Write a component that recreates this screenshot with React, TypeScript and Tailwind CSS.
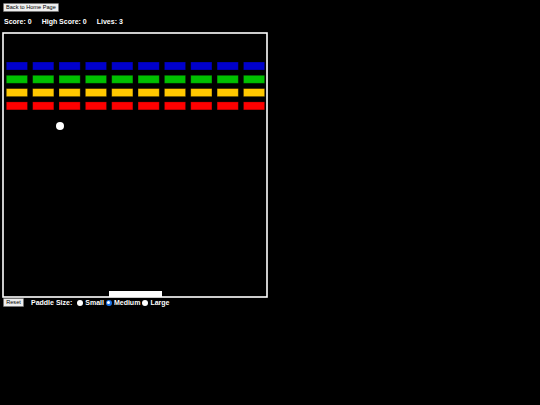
import React from 'react';

const ROWS = ['#0000cc', '#00c000', '#ffc800', '#ff0000'];
const COLS = 10;

function Board() {
  return (
    <svg width="266" height="266" viewBox="0 0 266 266" className="block">
      <rect x="1" y="1" width="264" height="264" fill="#000" stroke="#fff" strokeWidth="1.6" />
      {ROWS.map((color, r) =>
        Array.from({ length: COLS }).map((_, c) => (
          <rect
            key={`${r}-${c}`}
            x={4.3 + c * 26.35}
            y={30 + r * 13.3}
            width={21.2}
            height={8}
            fill={color}
            stroke="#000"
            strokeOpacity="0.35"
            strokeWidth="0.8"
          />
        ))
      )}
      <circle cx="58" cy="94" r="4" fill="#fff" />
      <rect x="107" y="259" width="53" height="6" fill="#fff" />
    </svg>
  );
}

function Radio({ checked, label }: { checked?: boolean; label: string }) {
  return (
    <span className="flex items-center gap-[2px]">
      {checked ? (
        <span className="w-[6px] h-[6px] rounded-full bg-[#1a73e8] flex items-center justify-center">
          <span className="w-[3px] h-[3px] rounded-full bg-white" />
        </span>
      ) : (
        <span className="w-[6px] h-[6px] rounded-full bg-white" />
      )}
      <span>{label}</span>
    </span>
  );
}

export default function App() {
  return (
    <div
      className="w-[540px] h-[405px] bg-black text-white overflow-hidden antialiased"
      style={{ fontFamily: '"Liberation Sans", Arial, sans-serif' }}
    >
      <div className="pl-[3px] pt-[3px]">
        <button className="h-[9px] px-[2px] bg-[#efefef] border border-[#767676] rounded-[1px] text-black text-[5.6px] leading-none flex items-center">
          Back to Home Page
        </button>
      </div>
      <div className="flex gap-[10px] pl-[4px] mt-[5px] text-[7px] font-bold leading-none h-[8px] items-center">
        <span>Score: 0</span>
        <span>High Score: 0</span>
        <span>Lives: 3</span>
      </div>
      <div className="pl-[2px] mt-[7px]">
        <Board />
      </div>
      <div className="flex items-center pl-[3px] text-[7px] font-bold leading-none">
        <button className="h-[9px] w-[21px] bg-[#efefef] border border-[#767676] rounded-[1px] text-black text-[5.6px] font-normal leading-none flex items-center justify-center">
          Reset
        </button>
        <span className="ml-[7px]">Paddle Size:</span>
        <span className="ml-[5px] flex items-center gap-[2px]">
          <Radio label="Small" />
          <Radio checked label="Medium" />
          <Radio label="Large" />
        </span>
      </div>
    </div>
  );
}
